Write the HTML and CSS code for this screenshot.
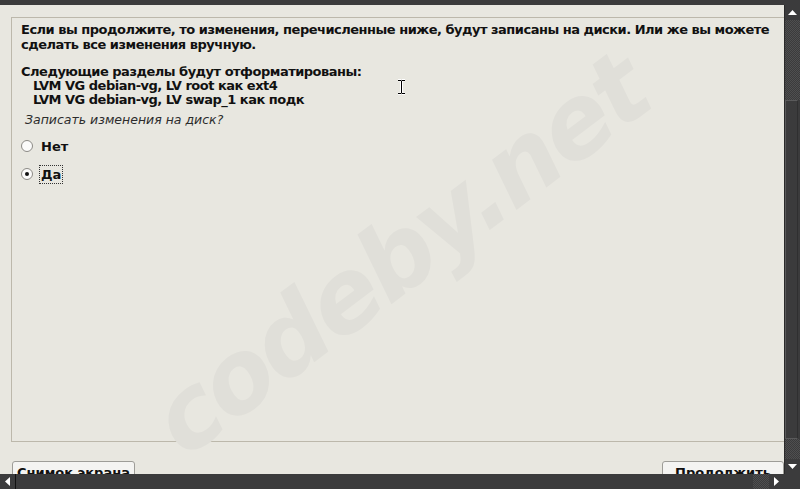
FILE: index.html
```html
<!DOCTYPE html>
<html lang="ru">
<head>
    <meta charset="UTF-8">
    <title>Разметка дисков</title>
    <link rel="stylesheet" href="styles.css">
</head>
<body>
    <div class="top-strip"></div>

    <div class="screen">
        <div class="content">
            <div class="panel">
                <p class="intro">Если вы продолжите, то изменения, перечисленные ниже, будут записаны на диски. Или же вы можете сделать все изменения вручную.</p>
                <p class="intro">Следующие разделы будут отформатированы:</p>
                <div class="part-list">
                    <div>LVM VG debian-vg, LV root как ext4</div>
                    <div>LVM VG debian-vg, LV swap_1 как подк</div>
                </div>
                <div class="question">Записать изменения на диск?</div>

                <label class="choice">
                    <span class="radio"></span>
                    <span class="choice-text">Нет</span>
                </label>
                <label class="choice">
                    <span class="radio checked"></span>
                    <span class="choice-text focused">Да</span>
                </label>
            </div>

            <div class="buttons">
                <button class="btn">Снимок экрана</button>
                <button class="btn">Продолжить</button>
            </div>

            <!-- watermark over the dialog -->
            <div class="watermark">codeby.net</div>

            <!-- mouse pointer (text cursor) -->
            <svg class="cursor" width="9" height="16" viewBox="0 0 9 16">
                <path d="M1 1h3M5 1h3M4.5 1v14M1 15h3M5 15h3" stroke="#fff" stroke-width="3" fill="none"/>
                <path d="M1 1.5h3M5 1.5h3M4.5 1.5v13M1 14.5h3M5 14.5h3" stroke="#000" stroke-width="1" fill="none"/>
            </svg>
        </div>

        <div class="vscroll">
            <div class="arrow-btn">
                <svg width="9" height="5" viewBox="0 0 9 5"><path d="M0 5L4.5 0L9 5Z" fill="#fff"/></svg>
            </div>
            <div class="trough trough-top"></div>
            <div class="thumb"></div>
            <div class="trough trough-bottom"></div>
            <div class="arrow-btn">
                <svg width="9" height="5" viewBox="0 0 9 5"><path d="M0 0L9 0L4.5 5Z" fill="#fff"/></svg>
            </div>
        </div>
    </div>

    <div class="hscroll">
        <div class="arrow-btn left">
            <svg width="5" height="9" viewBox="0 0 5 9"><path d="M5 0L5 9L0 4.5Z" fill="#fff"/></svg>
        </div>
        <div class="h-thumb"></div>
        <div class="trough h-trough"></div>
        <div class="arrow-btn">
            <svg width="5" height="9" viewBox="0 0 5 9"><path d="M0 0L5 4.5L0 9Z" fill="#fff"/></svg>
        </div>
        <div class="corner"></div>
    </div>
</body>
</html>
```

FILE: styles.css
```css
:root {
    --bg: #e8e7e0;
    --bar: #3b3b3c;
    --border: #bcb8ab;
    --text: #111111;
}

html, body {
    margin: 0;
    height: 100%;
}

body {
    width: 800px;
    height: 489px;
    overflow: hidden;
    background: var(--bg);
    font-family: "DejaVu Sans", sans-serif;
    color: var(--text);
    display: flex;
    flex-direction: column;
}

.top-strip {
    height: 5px;
    background: var(--bar);
    flex-shrink: 0;
}

.screen {
    display: flex;
    height: 469px;
    flex-shrink: 0;
}

.content {
    position: relative;
    flex-grow: 1;
    overflow: hidden;
    padding: 12px 0 0 11px;
}

.panel {
    border: 1px solid var(--border);
    border-right: none;
    padding: 4px 6px 0 9px;
    box-sizing: border-box;
    height: 425px;
}

.intro {
    margin: 0 0 12px 0;
    font-size: 13px;
    font-weight: bold;
    line-height: 15px;
    letter-spacing: -0.5px;
}

.intro + .intro {
    margin-bottom: 0;
}

.part-list {
    padding-left: 12px;
    font-size: 13px;
    font-weight: bold;
    line-height: 14px;
    letter-spacing: -0.5px;
}

.question {
    margin: 5px 0 0 4px;
    font-style: italic;
    font-size: 12.5px;
    line-height: 15px;
    color: #2c2c2c;
}

.choice {
    display: flex;
    align-items: center;
    gap: 6px;
    margin-top: 11px;
    height: 16px;
}

.choice + .choice {
    margin-top: 12px;
}

.radio {
    width: 10px;
    height: 10px;
    border: 1px solid #8c8a85;
    border-radius: 50%;
    background: #fbfbfa;
    display: flex;
    align-items: center;
    justify-content: center;
}

.radio.checked::after {
    content: "";
    width: 4px;
    height: 4px;
    border-radius: 50%;
    background: #111;
}

.choice-text {
    font-size: 13px;
    font-weight: bold;
    line-height: 15px;
    padding: 1px 1px;
    border: 1px dotted transparent;
}

.choice-text.focused {
    border-color: #333;
}

.buttons {
    display: flex;
    justify-content: space-between;
    margin-top: 19px;
    margin-left: 1px;
}

.btn {
    font-family: "DejaVu Sans", sans-serif;
    font-size: 13px;
    font-weight: bold;
    color: var(--text);
    background: #f4f4f2;
    border: 1px solid #9e9d98;
    border-radius: 3px;
    height: 26px;
    padding: 3px 0 0;
    white-space: nowrap;
    text-align: center;
    align-self: flex-start;
    display: flex;
    justify-content: center;
}

.btn:first-child {
    width: 123px;
}

.btn:last-child {
    width: 122px;
}

.watermark {
    position: absolute;
    left: 70px;
    top: 190px;
    width: 660px;
    text-align: center;
    font-weight: bold;
    font-style: italic;
    font-size: 100px;
    line-height: 120px;
    letter-spacing: -3px;
    color: #e0dfd9;
    transform: rotate(-37deg);
    pointer-events: none;
}

.cursor {
    position: absolute;
    left: 397px;
    top: 74px;
}

.vscroll {
    width: 15px;
    flex-shrink: 0;
    display: flex;
    flex-direction: column;
    background: var(--bar);
    border-left: 1px solid #2a2a2a;
}

.arrow-btn {
    width: 15px;
    height: 15px;
    background: var(--bar);
    display: flex;
    align-items: center;
    justify-content: center;
    flex-shrink: 0;
}

.trough {
    background-color: #3b3b3c;
    background-image: conic-gradient(#4f4f50 25%, #3b3b3c 0 50%, #4f4f50 0 75%, #3b3b3c 0);
    background-size: 2px 2px;
}

.trough-top {
    height: 80px;
}

.thumb {
    flex-grow: 1;
    background: var(--bar);
    border: 1px solid #5a5a5b;
    border-right-color: #2f2f30;
    margin-right: 2px;
}

.trough-bottom {
    height: 20px;
}

.hscroll {
    height: 15px;
    flex-shrink: 0;
    display: flex;
    background: var(--bar);
}

.hscroll .arrow-btn.left {
    border-right: 1px solid #111;
}

.h-thumb {
    flex-grow: 1;
    background: var(--bar);
}

.h-trough {
    width: 16px;
}

.corner {
    width: 16px;
    background: var(--bar);
}
```
